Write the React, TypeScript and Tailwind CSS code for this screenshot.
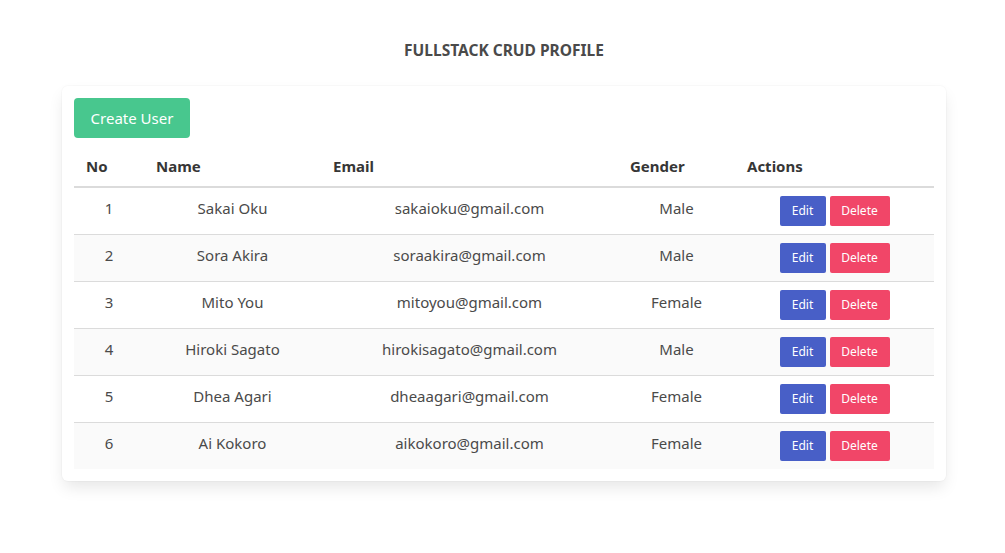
const users = [
  { id: 1, name: "Sakai Oku", email: "sakaioku@gmail.com", gender: "Male" },
  { id: 2, name: "Sora Akira", email: "soraakira@gmail.com", gender: "Male" },
  { id: 3, name: "Mito You", email: "mitoyou@gmail.com", gender: "Female" },
  { id: 4, name: "Hiroki Sagato", email: "hirokisagato@gmail.com", gender: "Male" },
  { id: 5, name: "Dhea Agari", email: "dheaagari@gmail.com", gender: "Female" },
  { id: 6, name: "Ai Kokoro", email: "aikokoro@gmail.com", gender: "Female" },
];

export default function App() {
  return (
    <div
      className="min-h-[553px] w-full bg-white text-[#4a4a4a]"
      style={{ fontFamily: '"Noto Sans", "Open Sans", sans-serif' }}
    >
      <div className="ml-[62px] w-[884px]">
        <h1 className="pt-[38px] text-center text-[15.5px] font-bold leading-6 text-[#4a4a4a]">
          FULLSTACK CRUD PROFILE
        </h1>

        <div className="mt-[24px] rounded-md bg-white p-3 shadow-[0_8px_16px_-2px_rgba(10,10,10,0.1),0_0_0_1px_rgba(10,10,10,0.02)]">
          {/* Toolbar */}
          <button
            type="button"
            className="h-10 w-[116px] rounded-[4px] bg-[#48c78e] text-[15px] text-white"
          >
            Create User
          </button>

          {/* Table */}
          <table className="mt-2 w-full border-collapse text-[15px]">
            <thead>
              <tr className="border-b-2 border-[#dbdbdb] text-left text-[#363636]">
                <th className="w-[70px] px-3 py-2 align-top font-bold leading-6">No</th>
                <th className="w-[177px] px-3 py-2 align-top font-bold leading-6">Name</th>
                <th className="w-[297px] px-3 py-2 align-top font-bold leading-6">Email</th>
                <th className="w-[117px] px-3 py-2 align-top font-bold leading-6">Gender</th>
                <th className="px-3 py-2 align-top font-bold leading-6">Actions</th>
              </tr>
            </thead>
            <tbody>
              {users.map((u, i) => (
                <tr
                  key={u.id}
                  className={`text-center ${i < users.length - 1 ? "border-b border-[#dbdbdb]" : ""} ${
                    i % 2 === 1 ? "bg-[#fafafa]" : "bg-white"
                  }`}
                >
                  <td className="px-3 py-2 align-top leading-6">{u.id}</td>
                  <td className="px-3 py-2 align-top leading-6">{u.name}</td>
                  <td className="px-3 py-2 align-top leading-6">{u.email}</td>
                  <td className="px-3 py-2 align-top leading-6">{u.gender}</td>
                  <td className="px-3 py-2 align-top">
                    <div className="flex justify-center gap-1">
                      <button
                        type="button"
                        className="h-[30px] w-[46px] rounded-[2px] bg-[#485fc7] text-[12px] text-white"
                      >
                        Edit
                      </button>
                      <button
                        type="button"
                        className="h-[30px] w-[60px] rounded-[2px] bg-[#f14668] text-[12px] text-white"
                      >
                        Delete
                      </button>
                    </div>
                  </td>
                </tr>
              ))}
            </tbody>
          </table>
        </div>
      </div>
    </div>
  );
}
